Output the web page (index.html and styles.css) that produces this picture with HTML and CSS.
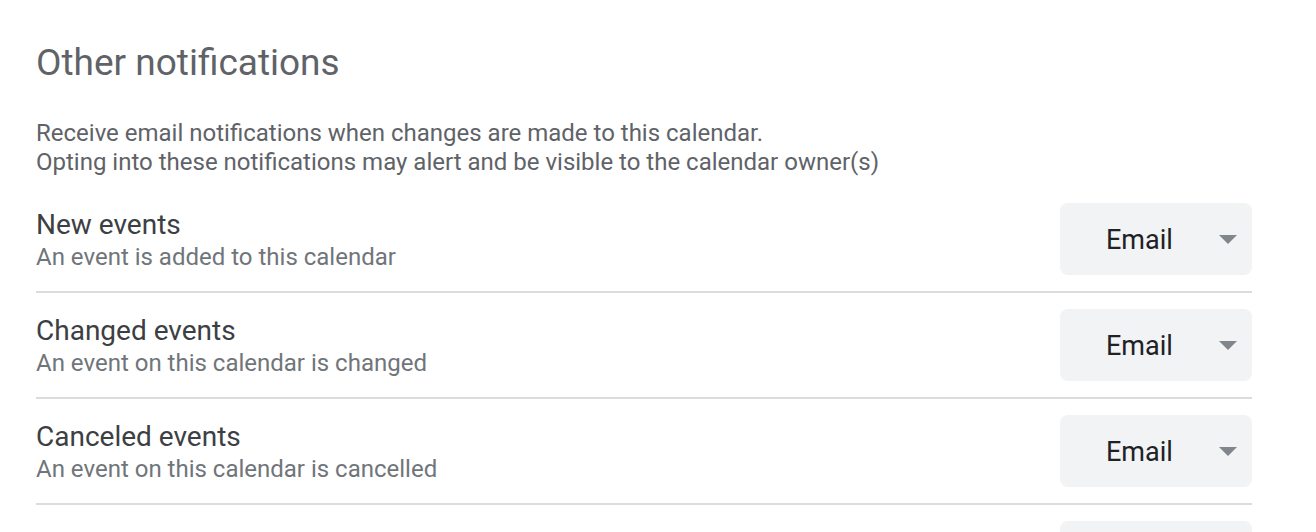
FILE: index.html
```html
<!DOCTYPE html>
<html lang="en">
<head>
    <meta charset="UTF-8">
    <meta name="viewport" content="width=device-width, initial-scale=1.0">
    <title>Other notifications</title>
    <link rel="stylesheet" href="styles.css">
</head>
<body>
    <div class="section">
        <h2 class="section-title">Other notifications</h2>
        <p class="section-desc">
            Receive email notifications when changes are made to this calendar.<br>
            Opting into these notifications may alert and be visible to the calendar owner(s)
        </p>

        <div class="notif-row">
            <div class="notif-text">
                <div class="notif-label">New events</div>
                <div class="notif-sub">An event is added to this calendar</div>
            </div>
            <div class="select">
                <span class="select-value">Email</span>
                <span class="select-arrow"></span>
            </div>
        </div>

        <div class="notif-row">
            <div class="notif-text">
                <div class="notif-label">Changed events</div>
                <div class="notif-sub">An event on this calendar is changed</div>
            </div>
            <div class="select">
                <span class="select-value">Email</span>
                <span class="select-arrow"></span>
            </div>
        </div>

        <div class="notif-row">
            <div class="notif-text">
                <div class="notif-label">Canceled events</div>
                <div class="notif-sub">An event on this calendar is cancelled</div>
            </div>
            <div class="select">
                <span class="select-value">Email</span>
                <span class="select-arrow"></span>
            </div>
        </div>

        <div class="notif-row">
            <div class="notif-text">
                <div class="notif-label">Event responses</div>
                <div class="notif-sub">Guests respond to an event on this calendar</div>
            </div>
            <div class="select">
                <span class="select-value">None</span>
                <span class="select-arrow"></span>
            </div>
        </div>
    </div>
</body>
</html>
```

FILE: styles.css
```css
body {
    margin: 0;
    background: #ffffff;
    font-family: Roboto, "Liberation Sans", Arial, sans-serif;
    overflow: hidden;
}
.section {
    width: 1216px;
    padding: 41px 0 0 36px;
}
.section-title {
    margin: 0;
    font-size: 37px;
    line-height: 44px;
    font-weight: 400;
    color: #5f6368;
}
.section-desc {
    margin: 34px 0 10px;
    font-size: 24px;
    line-height: 29px;
    color: #5f6368;
}
.notif-row {
    display: flex;
    align-items: center;
    justify-content: space-between;
    padding: 16px 0;
    border-bottom: 2px solid #dadce0;
}
.notif-text {
    padding-top: 3px;
}
.notif-label {
    font-size: 28px;
    line-height: 32px;
    color: #3c4043;
}
.notif-sub {
    font-size: 24px;
    line-height: 32px;
    color: #70757a;
}
.select {
    display: flex;
    align-items: center;
    box-sizing: border-box;
    width: 192px;
    height: 72px;
    padding: 0 15px 0 46px;
    background: #f1f3f4;
    border-radius: 8px;
}
.select-value {
    flex: 1;
    font-size: 27px;
    line-height: 32px;
    padding-top: 1px;
    color: #202124;
}
.select-arrow {
    width: 0;
    height: 0;
    border-left: 9px solid transparent;
    border-right: 9px solid transparent;
    border-top: 9px solid #80868b;
}
```
